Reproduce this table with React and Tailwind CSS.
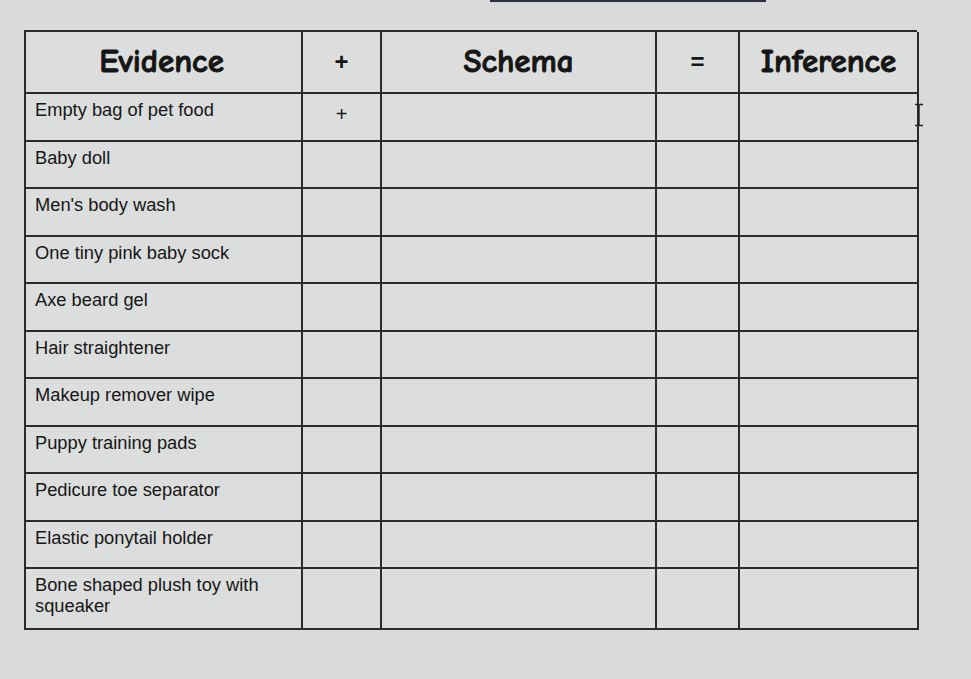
import React from 'react';

const evidence = [
  'Empty bag of pet food',
  'Baby doll',
  "Men's body wash",
  'One tiny pink baby sock',
  'Axe beard gel',
  'Hair straightener',
  'Makeup remover wipe',
  'Puppy training pads',
  'Pedicure toe separator',
  'Elastic ponytail holder',
  'Bone shaped plush toy with squeaker',
];

const headFont = { fontFamily: '"Comic Sans MS", "Comic Neue", "DejaVu Sans", sans-serif' };
const bodyFont = { fontFamily: '"Liberation Sans", Arial, sans-serif' };

const cell = 'border-r-2 border-b-2 border-[#2b2b2b]';
const headCell = `${cell} h-[62px] flex items-center justify-center`;
const title = 'text-[33px] font-bold [-webkit-text-stroke:0.9px_#151515]';
const sign = 'text-[24px] font-bold';

const App = () => {
  return (
    <div className="relative w-[971px] h-[679px] overflow-hidden bg-[#d9dbda]">
      <div className="absolute left-[490px] top-0 w-[276px] h-[2px] bg-[#2c2f45]" />

      <div className="pt-[30px] pl-[24px]">
        <div className="grid grid-cols-[277px_79px_275px_83px_179px] w-[893px] border-l-2 border-t-2 border-[#2b2b2b] bg-[#dcdedd] text-[#161616]">
          {/* header */}
          <div className={headCell}>
            <span className={`${title} pr-[4px]`} style={headFont}>Evidence</span>
          </div>
          <div className={headCell}>
            <span className={sign} style={bodyFont}>+</span>
          </div>
          <div className={headCell}>
            <span className={title} style={headFont}>Schema</span>
          </div>
          <div className={headCell}>
            <span className={sign} style={bodyFont}>=</span>
          </div>
          <div className={headCell}>
            <span className={title} style={headFont}>Inference</span>
          </div>

          {evidence.map((item, i) => {
            const last = i === evidence.length - 1;
            const h = last ? 'h-[61px]' : 'h-[47.5px]';
            return (
              <React.Fragment key={item}>
                <div className={`${cell} ${h} pl-[9px] pr-[8px] pt-[5px] text-[18.3px] leading-[21px]`} style={bodyFont}>
                  {item}
                </div>
                <div className={`${cell} ${h} flex justify-center pt-[10px] text-[20px] leading-[21px]`} style={bodyFont}>
                  {i === 0 ? '+' : ''}
                </div>
                <div className={`${cell} ${h}`} />
                <div className={`${cell} ${h}`} />
                <div className={`${cell} ${h}`} />
              </React.Fragment>
            );
          })}
        </div>
      </div>

      {/* text cursor */}
      <svg className="absolute left-[913px] top-[103px]" width="12" height="24" viewBox="0 0 12 24">
        <path d="M2 1.5h3l1 1 1-1h3M6 2.5v19M2 22.5h3l1-1 1 1h3" fill="none" stroke="#222" strokeWidth="1.4" />
      </svg>
    </div>
  );
};

export default App;
